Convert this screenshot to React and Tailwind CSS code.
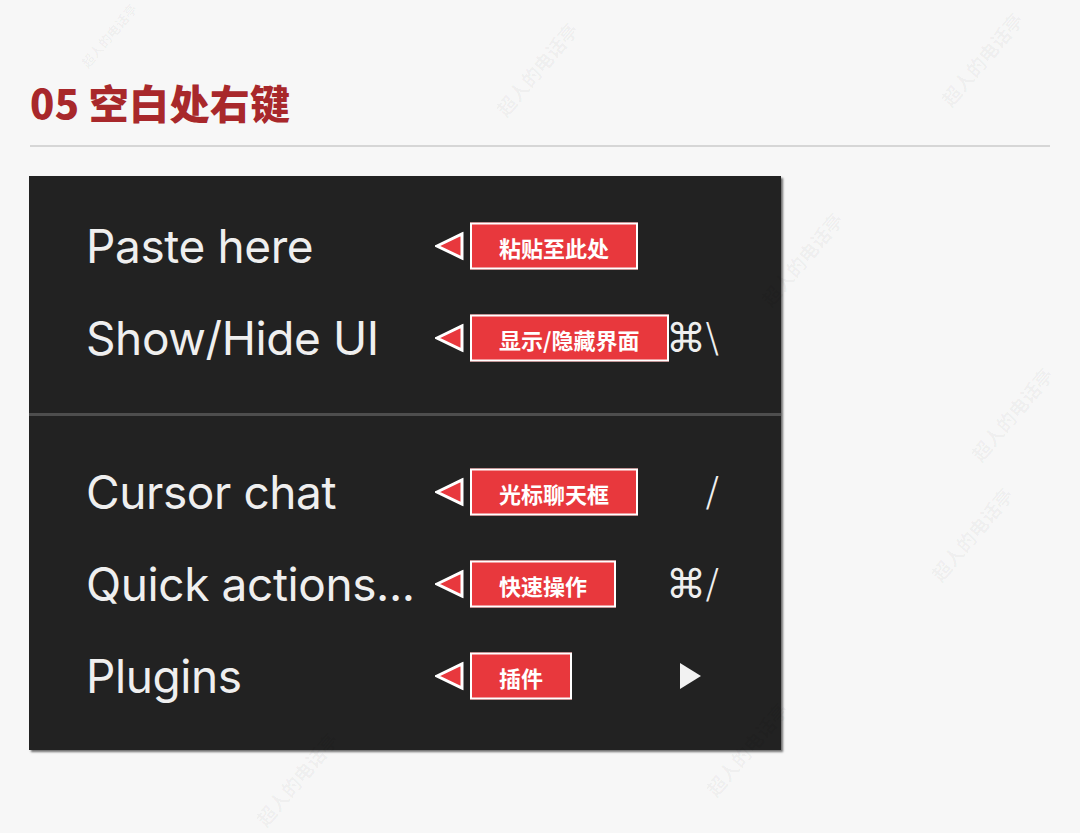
const rows = [
  { label: "Paste here", note: "粘贴至此处", shortcut: null },
  { label: "Show/Hide UI", note: "显示/隐藏界面", shortcut: "⌘\\" },
];

const rows2 = [
  { label: "Cursor chat", note: "光标聊天框", shortcut: "/" },
  { label: "Quick actions...", note: "快速操作", shortcut: "⌘/" },
  { label: "Plugins", note: "插件", shortcut: "arrow" },
];

const marks = [
  "left-[480px] top-[55px]",
  "left-[925px] top-[45px]",
  "left-[745px] top-[245px]",
  "left-[955px] top-[400px]",
  "left-[915px] top-[520px]",
  "left-[240px] top-[765px]",
  "left-[690px] top-[735px]",
];

export default function App() {
  return (
    <div className="relative min-h-[833px] overflow-hidden bg-[#f7f7f7] px-[30px] pt-[74px] font-['Inter','Noto_Sans_CJK_SC',sans-serif]">
      {/* HEADER */}
      <h1 className="font-['Noto_Sans_CJK_SC',sans-serif] text-[40px] font-black leading-[56px] tracking-[0.3px] text-[#a8282b]">
        05 空白处右键
      </h1>
      <div className="mt-[15px] h-[2px] w-[1020px] bg-[#d6d6d6]" />

      {/* MENU */}
      <div className="mt-[29px] -ml-px w-[752px] bg-[#222222] pt-[24px] pb-[28px] shadow-[2px_2px_2px_rgba(0,0,0,0.55)]">
        {rows.map((r) => (
          <MenuRow key={r.label} {...r} />
        ))}
        <div className="mt-[29px] mb-[30px] h-[3px] bg-[#4e4e4e]" />
        {rows2.map((r) => (
          <MenuRow key={r.label} {...r} />
        ))}
      </div>

      {/* WATERMARKS */}
      <span className="pointer-events-none absolute left-[70px] top-[26px] -rotate-[50deg] font-['Noto_Sans_CJK_SC',sans-serif] text-[13px] font-bold text-black/[0.04]">
        超人的电话亭
      </span>
      {marks.map((m) => (
        <span
          key={m}
          className={`pointer-events-none absolute ${m} -rotate-[50deg] font-['Noto_Sans_CJK_SC',sans-serif] text-[19px] font-bold text-black/[0.04]`}
        >
          超人的电话亭
        </span>
      ))}
    </div>
  );
}

function MenuRow({ label, note, shortcut }) {
  return (
    <div className="relative flex h-[92px] items-center justify-between pl-[57px] pr-[62px]">
      <span className="text-[46px] leading-none tracking-[-0.4px] text-[#efefef]">
        {label}
      </span>

      {shortcut === "arrow" ? (
        <svg width="23" height="28" viewBox="0 0 23 28" className="mr-[17px]">
          <polygon points="1,1 22,14 1,27" fill="#f2f2f2" />
        </svg>
      ) : (
        <span className="font-['DejaVu_Sans',sans-serif] text-[40px] font-light leading-none text-[#efefef]">
          {shortcut}
        </span>
      )}

      <Note text={note} />
    </div>
  );
}

function Note({ text }) {
  return (
    <div className="absolute left-[406px] top-1/2 flex -translate-y-1/2 items-center gap-[6px]">
      <svg width="29" height="29" viewBox="0 0 29 29">
        <polygon
          points="2,14.5 27,2.5 27,26.5"
          fill="#e8383d"
          stroke="#ffffff"
          strokeWidth="3"
          strokeLinejoin="miter"
        />
      </svg>
      <div className="flex h-[47px] items-center border-2 border-white bg-[#e8383d] px-[27px] font-['Noto_Sans_CJK_SC',sans-serif] text-[22px] font-bold leading-none text-white">
        {text}
      </div>
    </div>
  );
}
